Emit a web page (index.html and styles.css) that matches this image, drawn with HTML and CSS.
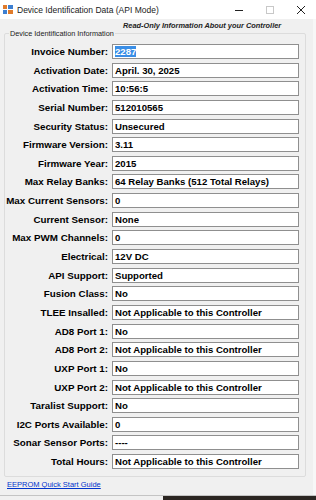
FILE: index.html
```html
<!DOCTYPE html>
<html lang="en">
<head>
    <meta charset="UTF-8">
    <meta name="viewport" content="width=device-width, initial-scale=1.0">
    <title>Device Identification Data (API Mode)</title>
    <link rel="stylesheet" href="styles.css">
</head>
<body>
    <div class="window">
        <div class="titlebar">
            <svg class="app-icon" width="10" height="9" viewBox="0 0 10 9">
                <rect x="0" y="0" width="4" height="4" fill="#e07b2a"/>
                <rect x="5" y="0" width="5" height="4" fill="#3d7fd1"/>
                <rect x="0" y="5" width="4" height="4" fill="#3d7fd1"/>
                <rect x="5" y="5" width="5" height="4" fill="#e07b2a"/>
            </svg>
            <span class="title">Device Identification Data (API Mode)</span>
            <div class="controls">
                <span class="ctrl">
                    <svg width="10" height="10" viewBox="0 0 10 10"><path d="M1 5.5h8" stroke="#222" stroke-width="1"/></svg>
                </span>
                <span class="ctrl">
                    <svg width="10" height="10" viewBox="0 0 10 10"><rect x="1.5" y="1.5" width="7" height="7" fill="none" stroke="#c8c8c8" stroke-width="1"/></svg>
                </span>
                <span class="ctrl">
                    <svg width="10" height="10" viewBox="0 0 10 10"><path d="M1 1L9 9M9 1L1 9" stroke="#222" stroke-width="1"/></svg>
                </span>
            </div>
        </div>

        <div class="client">
            <div class="note">Read-Only Information About your Controller</div>

            <fieldset class="group">
                <legend>Device Identification Information</legend>
                <div class="rows">
                    <label>Invoice Number:</label><div class="box"><span class="selected">2287</span></div>
                    <label>Activation Date:</label><div class="box">April. 30, 2025</div>
                    <label>Activation Time:</label><div class="box">10:56:5</div>
                    <label>Serial Number:</label><div class="box">512010565</div>
                    <label>Security Status:</label><div class="box">Unsecured</div>
                    <label>Firmware Version:</label><div class="box">3.11</div>
                    <label>Firmware Year:</label><div class="box">2015</div>
                    <label>Max Relay Banks:</label><div class="box">64 Relay Banks (512 Total Relays)</div>
                    <label>Max Current Sensors:</label><div class="box">0</div>
                    <label>Current Sensor:</label><div class="box">None</div>
                    <label>Max PWM Channels:</label><div class="box">0</div>
                    <label>Electrical:</label><div class="box">12V DC</div>
                    <label>API Support:</label><div class="box">Supported</div>
                    <label>Fusion Class:</label><div class="box">No</div>
                    <label>TLEE Insalled:</label><div class="box">Not Applicable to this Controller</div>
                    <label>AD8 Port 1:</label><div class="box">No</div>
                    <label>AD8 Port 2:</label><div class="box">Not Applicable to this Controller</div>
                    <label>UXP Port 1:</label><div class="box">No</div>
                    <label>UXP Port 2:</label><div class="box">Not Applicable to this Controller</div>
                    <label>Taralist Support:</label><div class="box">No</div>
                    <label>I2C Ports Available:</label><div class="box">0</div>
                    <label>Sonar Sensor Ports:</label><div class="box">----</div>
                    <label>Total Hours:</label><div class="box">Not Applicable to this Controller</div>
                </div>
            </fieldset>

            <a class="guide" href="#">EEPROM Quick Start Guide</a>
        </div>

        <div class="bottom-edge">
            <div class="dark-strip"></div>
        </div>
    </div>
</body>
</html>
```

FILE: styles.css
```css
body {
    margin: 0;
    padding: 0;
    background-color: #f0f0f0;
    font-family: "Liberation Sans", Arial, sans-serif;
    color: #000;
}

.window {
    width: 316px;
    height: 500px;
    display: flex;
    flex-direction: column;
    overflow: hidden;
}

.titlebar {
    height: 19px;
    background-color: #ffffff;
    display: flex;
    align-items: center;
    padding-left: 3px;
}

.app-icon {
    margin-right: 4px;
}

.title {
    font-size: 8.5px;
    color: #1a1a1a;
    flex: 1;
}

.controls {
    display: flex;
    height: 100%;
}

.ctrl {
    width: 31px;
    display: flex;
    align-items: center;
    justify-content: center;
}

.client {
    flex: 1;
    background-color: #f0f0f0;
    border-right: 3px solid #f7f7f7;
    padding: 2px 7px 0 4px;
    display: flex;
    flex-direction: column;
}

.note {
    font-size: 7.4px;
    font-weight: bold;
    font-style: italic;
    line-height: 9px;
    color: #222;
    padding-left: 119px;
}

.group {
    margin: -1px 0 0 0;
    padding: 6px 5px 7px 0;
    border: 1px solid #dcdcdc;
    border-radius: 2px;
}

.group legend {
    font-size: 7.3px;
    color: #222;
    padding: 0 1px;
    margin-left: 4px;
}

.rows {
    display: grid;
    grid-template-columns: 104px 187px;
    grid-auto-rows: 15px;
    row-gap: 3.65px;
    column-gap: 4px;
    margin-left: -1px;
}

.rows label {
    display: flex;
    justify-content: flex-end;
    align-items: center;
    white-space: nowrap;
    font-size: 9.8px;
    font-weight: bold;
}

.box {
    background-color: #ffffff;
    border: 1px solid #8f8f8f;
    box-sizing: border-box;
    font-size: 9.6px;
    font-weight: bold;
    line-height: 13px;
    padding-left: 2px;
    white-space: nowrap;
}

.selected {
    background-color: #3a8ee6;
    color: #ffffff;
}

.guide {
    margin: 3px 0 0 3px;
    font-size: 7.5px;
    color: #0033cc;
    text-decoration: underline;
}

.bottom-edge {
    height: 4px;
    border-top: 1px solid #c4c4c4;
    background-color: #f0f0f0;
    display: flex;
    justify-content: flex-end;
}

.dark-strip {
    width: 153px;
    background-color: #2b2622;
}
```
